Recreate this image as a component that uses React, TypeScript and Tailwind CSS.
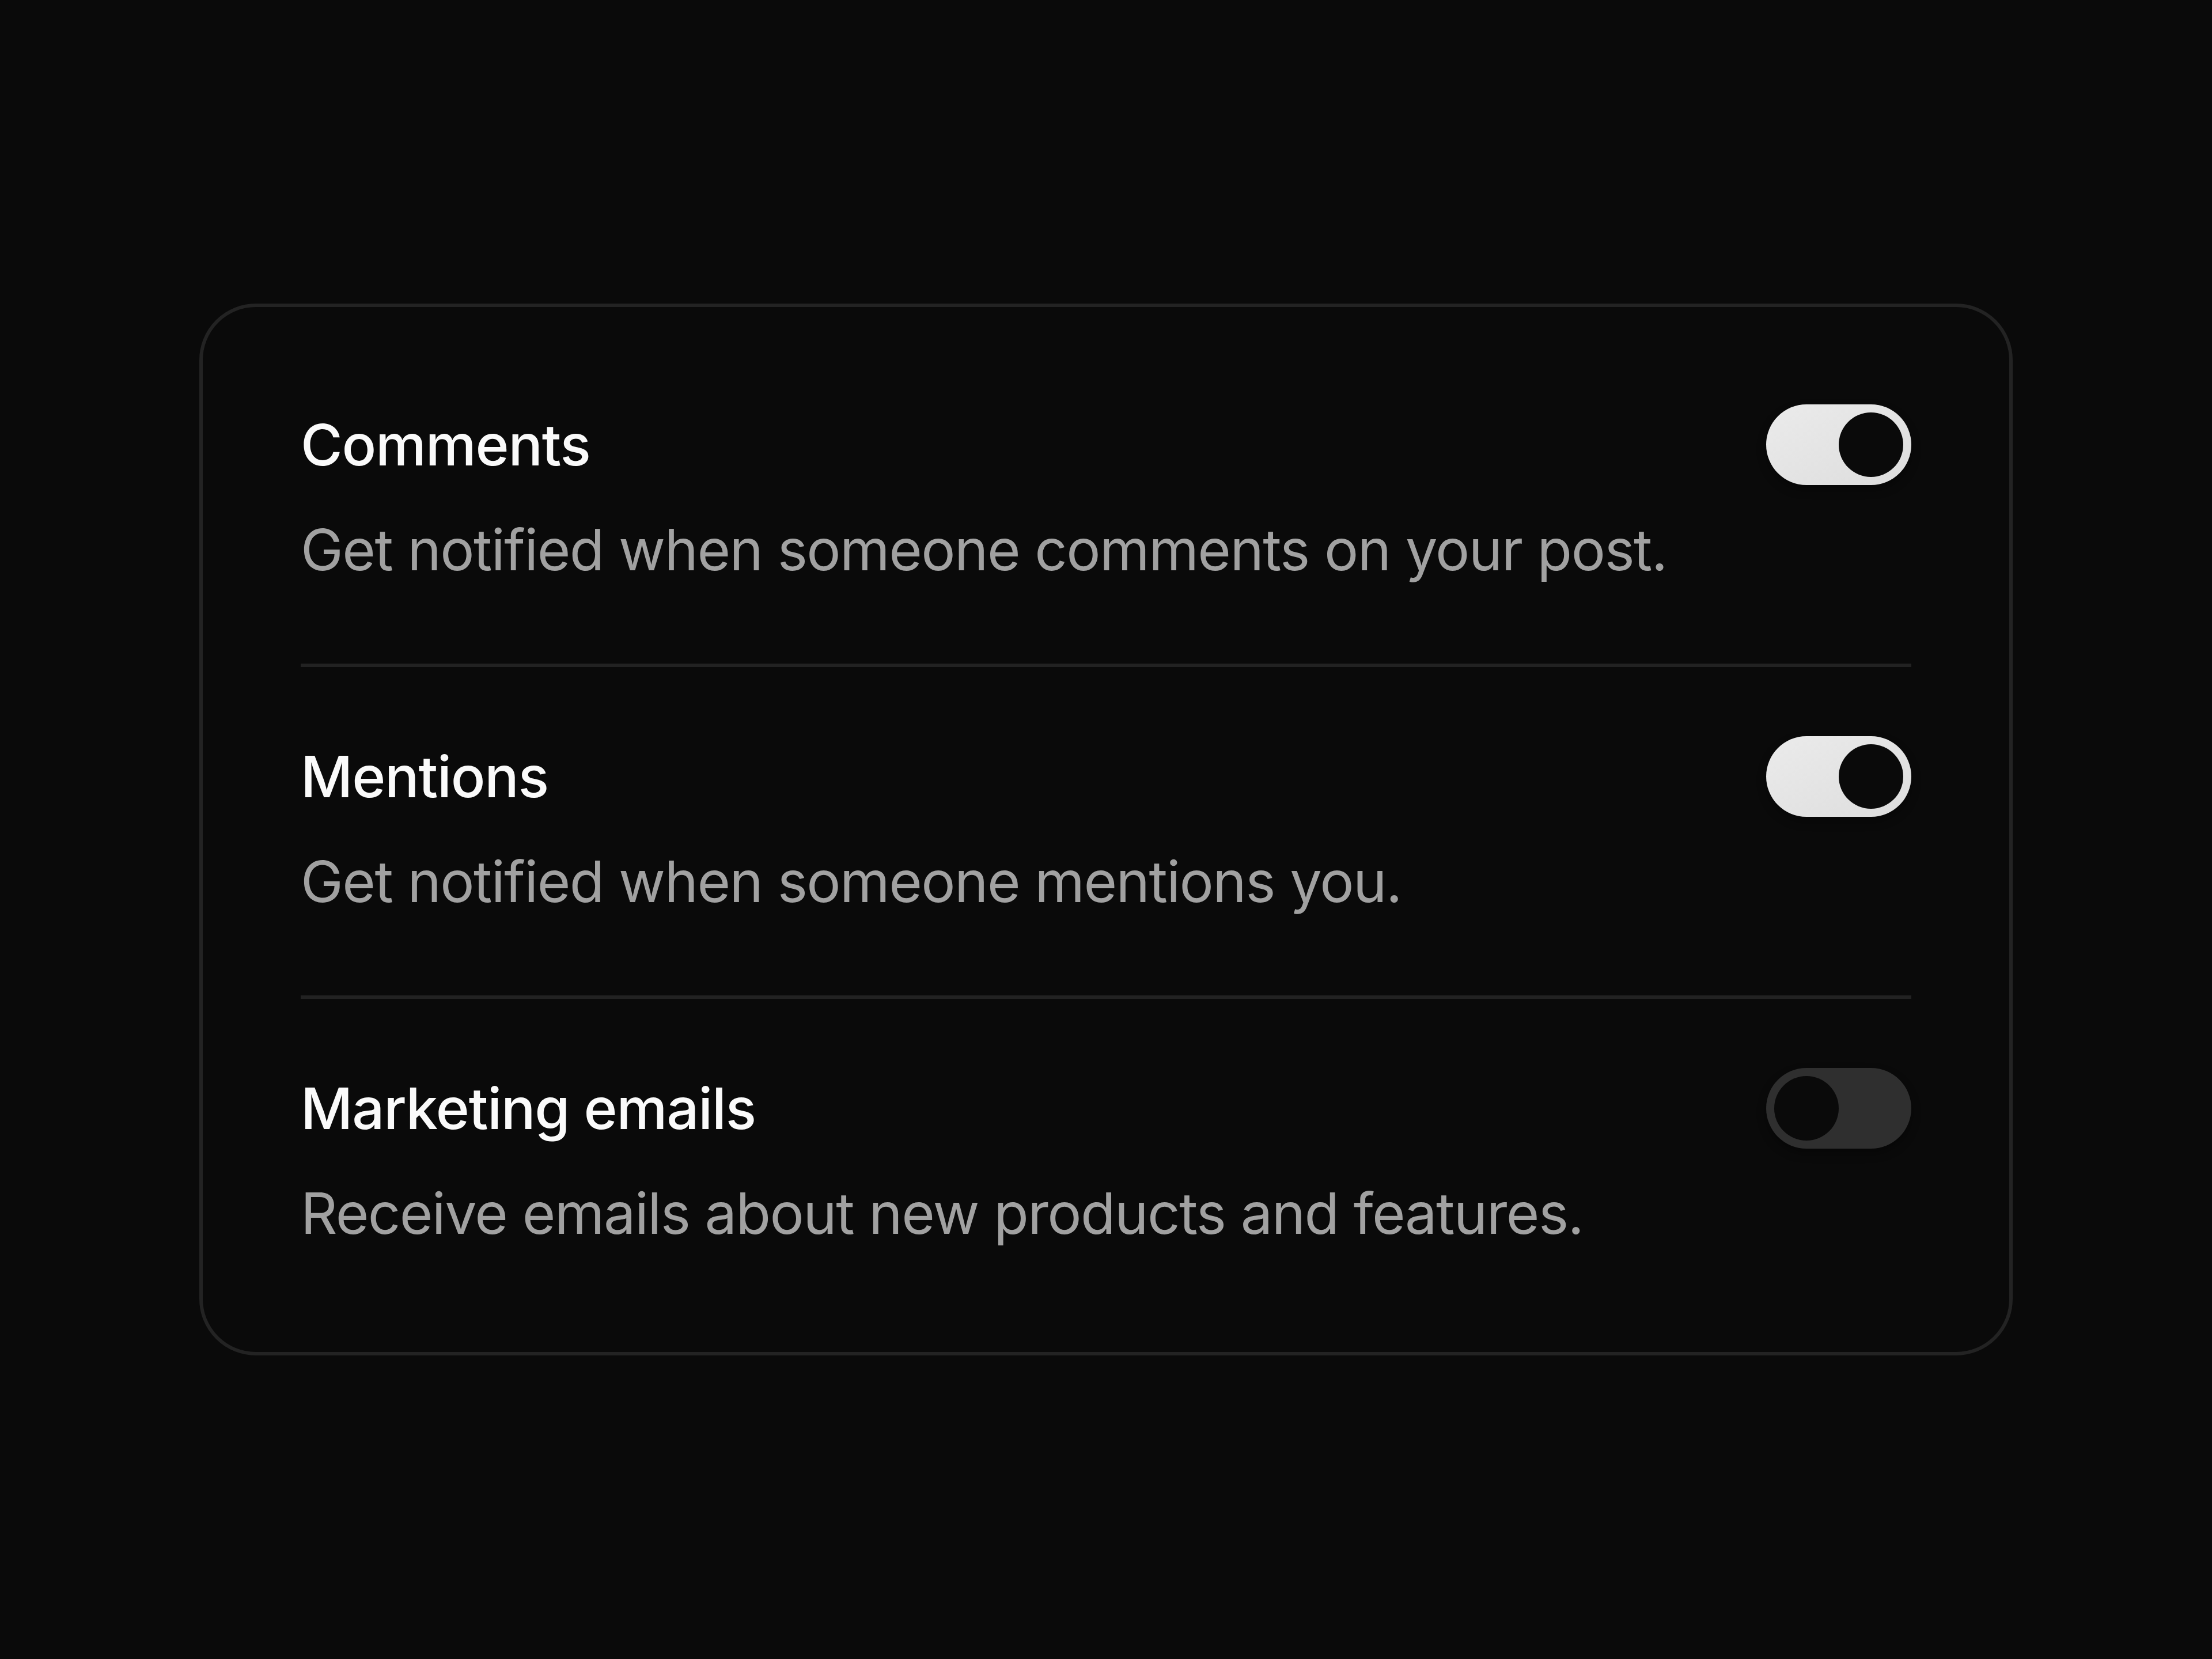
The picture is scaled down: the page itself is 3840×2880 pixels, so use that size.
import { useState } from "react";

type Pref = {
  id: string;
  title: string;
  description: string;
  enabled: boolean;
};

const initialPrefs: Pref[] = [
  {
    id: "comments",
    title: "Comments",
    description: "Get notified when someone comments on your post.",
    enabled: true,
  },
  {
    id: "mentions",
    title: "Mentions",
    description: "Get notified when someone mentions you.",
    enabled: true,
  },
  {
    id: "marketing",
    title: "Marketing emails",
    description: "Receive emails about new products and features.",
    enabled: false,
  },
];

function Toggle({ checked, onChange }: { checked: boolean; onChange: () => void }) {
  return (
    <button
      type="button"
      role="switch"
      aria-checked={checked}
      onClick={onChange}
      className={
        checked
          ? "flex h-[140px] w-[252px] shrink-0 items-center justify-end rounded-full bg-linear-to-br from-[#ebebeb] to-[#dddddd] p-[14px] shadow-[0_8px_16px_rgba(0,0,0,0.35)]"
          : "flex h-[140px] w-[252px] shrink-0 items-center justify-start rounded-full bg-[#2f2f2f] p-[14px] shadow-[0_8px_16px_rgba(0,0,0,0.35)]"
      }
    >
      <span className="block h-[112px] w-[112px] rounded-full bg-[#0a0a0a]" />
    </button>
  );
}

export default function App() {
  const [prefs, setPrefs] = useState(initialPrefs);

  const toggle = (id: string) =>
    setPrefs((list) => list.map((p) => (p.id === id ? { ...p, enabled: !p.enabled } : p)));

  return (
    <div className="flex min-h-screen w-full items-center justify-center bg-[#0a0a0a] font-['Inter','Liberation_Sans',sans-serif]">
      <div className="flex w-[3148px] flex-col rounded-[98px] border-[6px] border-[#232323] bg-[#0a0a0a] px-[170px] pt-[169px] pb-[171px]">
        {prefs.map((pref, i) => (
          <div key={pref.id}>
            {i > 0 && <div className="mt-[128px] mb-[120px] h-[6px] bg-[#222222]" />}
            <div className="flex items-start justify-between gap-[80px]">
              <div className="min-w-0">
                <div className="text-[99px] leading-[140px] font-medium tracking-[-1.2px] text-[#fafafa]">
                  {pref.title}
                </div>
                <div className="mt-[42px] text-[99px] leading-[140px] tracking-[-1.6px] text-[#a1a1a1]">
                  {pref.description}
                </div>
              </div>
              <Toggle checked={pref.enabled} onChange={() => toggle(pref.id)} />
            </div>
          </div>
        ))}
      </div>
    </div>
  );
}
